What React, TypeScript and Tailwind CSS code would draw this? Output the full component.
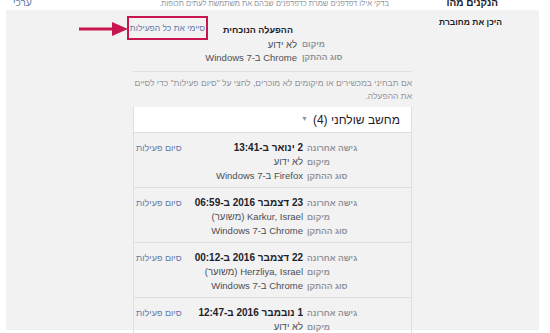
import React from 'react';

const font = { fontFamily: '"Liberation Sans", Arial, "DejaVu Sans", sans-serif' };

type Session = {
  last: string;
  location: string;
  device: string;
};

const sessions: Session[] = [
  { last: '2 ינואר ב-13:41', location: 'לא ידוע', device: 'Firefox ב-Windows 7' },
  { last: '23 דצמבר 2016 ב-06:59', location: 'Karkur, Israel (משוער)', device: 'Chrome ב-Windows 7' },
  { last: '22 דצמבר 2016 ב-00:12', location: 'Herzliya, Israel (משוער)', device: 'Chrome ב-Windows 7' },
  { last: '1 נובמבר 2016 ב-12:47', location: 'לא ידוע', device: 'Chrome ב-Windows 7' },
];

function SessionRow({ s }: { s: Session }) {
  return (
    <div className="flex border-t border-[#dddfe2] pt-2 pb-1 leading-[14px] whitespace-nowrap">
      {/* labels sit left-aligned in their cell, as on the page */}
      <div className="w-[104px] shrink-0 text-left text-[8.5px] font-bold text-[#90949c]">
        <div>גישה אחרונה</div>
        <div>מיקום</div>
        <div>סוג ההתקן</div>
      </div>
      <div className="flex-1 min-w-0 pr-[4px] text-[9.5px] text-[#4b4f56]">
        <div className="text-[10px] font-bold text-[#1d2129]">{s.last}</div>
        <div>{s.location}</div>
        <div>{s.device}</div>
      </div>
      <div className="pl-[2px] text-[9px] text-[#6579a7]">סיום פעילות</div>
    </div>
  );
}

export default function App() {
  return (
    <div dir="rtl" className="w-[550px] h-[333px] overflow-hidden bg-white" style={font}>
      {/* top strip, cut off by the screenshot */}
      <div className="h-[13px] overflow-hidden flex items-start whitespace-nowrap text-[10px] leading-[12px] -mt-[3px]">
        <div className="w-[93px] shrink-0 pr-[52px] font-bold text-[#1d2129]">הנקנים מהו</div>
        <div className="pr-[68px] pt-[1px] text-[7.5px] text-[#90949c]">בדקי אילו דפדפנים שמרת כדפדפנים שבהם את משתמשת לעתים תכופות.</div>
        <div className="mr-auto pl-[13px] text-[#6579a7]">ערכי</div>
      </div>

      {/* grey panel */}
      <div className="relative ml-[6px] mr-[11px] h-[320px] bg-[#f2f2f2] flex">
        <div className="w-[127px] shrink-0 pr-[37px] pt-[5px] whitespace-nowrap text-[8.5px] leading-[14px] font-bold text-[#1d2129]">
          היכן את מחוברת
        </div>

        <div className="w-[285px] shrink-0">
          {/* current session */}
          <div className="flex items-start pt-[6px] whitespace-nowrap">
            <div className="flex-1 min-w-0 pt-[7px]">
              <div className="flex leading-[14px]">
                <div className="w-[110px] shrink-0" />
                <div className="pr-[9px] text-[9px] font-bold text-[#1d2129]">ההפעלה הנוכחית</div>
              </div>
              <div className="flex mt-[1px] leading-[13px]">
                <div className="w-[110px] shrink-0 text-left text-[8.5px] font-bold text-[#90949c]">מיקום</div>
                <div className="pr-[5px] text-[9.5px] text-[#4b4f56]">לא ידוע</div>
              </div>
              <div className="flex leading-[13px]">
                <div className="w-[110px] shrink-0 text-left text-[8.5px] font-bold text-[#90949c]">סוג ההתקן</div>
                <div className="pr-[5px] text-[9.5px] text-[#4b4f56]">Chrome ב-Windows 7</div>
              </div>
            </div>
            <div className="w-[81px] h-[24px] shrink-0 border-2 border-[#c8174f] flex items-center justify-center text-[8.5px] text-[#6579a7]">
              סיימי את כל הפעילות
            </div>
          </div>

          <div className="ml-[6px]">
            <div className="mt-[7px] border-t border-[#dddfe2]" />
            <p className="mt-[5px] text-[8.5px] leading-[13px] text-[#90949c]">
              אם תבחיני במכשירים או מיקומים לא מוכרים, לחצי על "סיום פעילות" כדי לסיים את ההפעלה.
            </p>

            {/* desktop card */}
            <div className="mt-[4px] border-x border-[#dddfe2]">
              <div className="h-[25px] bg-white flex items-center pr-[11px] text-[12px] text-[#1d2129]">
                <span>מחשב שולחני (4)</span>
                <span className="mr-[5px] text-[7px] text-[#90949c]">▼</span>
              </div>
              {sessions.map((s, i) => (
                <SessionRow key={i} s={s} />
              ))}
            </div>
          </div>
        </div>

        {/* annotation arrow */}
        <svg className="absolute left-[73px] top-[11px]" width="50" height="16" viewBox="0 0 50 16">
          <line x1="0" y1="8" x2="36" y2="8" stroke="#c8174f" strokeWidth="3" />
          <polygon points="33,1 49,8 33,15" fill="#c8174f" />
        </svg>
      </div>
    </div>
  );
}
